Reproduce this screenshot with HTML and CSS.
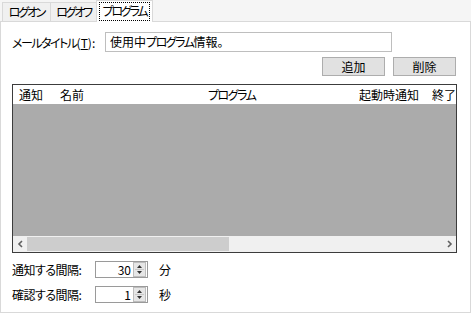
FILE: index.html
```html
<!DOCTYPE html>
<html lang="ja">
<head>
<meta charset="utf-8">
<link rel="stylesheet" href="styles.css">
</head>
<body>
<div class="tabs">
  <div class="tab t1"><span class="tk">ログオン</span></div>
  <div class="tab t2"><span class="tk">ログオフ</span></div>
  <div class="tab t3 active"><span class="focus"><span class="tk">プログラム</span></span></div>
</div>
<div class="panel">
  <div class="row title-row">
    <label class="title-label"><span class="k">メールタイトル</span>(<u>T</u>):</label>
    <div class="textbox">使用中<span class="k">プログラム</span>情報。</div>
  </div>
  <div class="row btn-row">
    <button class="btn">追加</button>
    <button class="btn">削除</button>
  </div>
  <div class="list">
    <div class="list-head">
      <div class="col c1">通知</div>
      <div class="col c2">名前</div>
      <div class="col c3"><span class="k">プログラム</span></div>
      <div class="col c4">起動時通知</div>
      <div class="col c5">終了</div>
    </div>
    <div class="list-body"></div>
    <div class="hscroll">
      <div class="arrow">
        <svg width="7" height="8" viewBox="0 0 7 8"><path d="M5 1 L2 4 L5 7" fill="none" stroke="#606060" stroke-width="1.6"/></svg>
      </div>
      <div class="track"><div class="thumb"></div></div>
      <div class="arrow">
        <svg width="7" height="8" viewBox="0 0 7 8"><path d="M2 1 L5 4 L2 7" fill="none" stroke="#606060" stroke-width="1.6"/></svg>
      </div>
    </div>
  </div>
  <div class="row spin-row">
    <span class="spin-label">通知する間隔:</span>
    <div class="spin">
      <span class="val">30</span>
      <span class="spin-btns">
        <svg width="11" height="13" viewBox="0 0 11 13"><path d="M3 5 L5.5 2 L8 5 Z" fill="#333"/><path d="M3 8 L5.5 11 L8 8 Z" fill="#333"/><path d="M1 6.5 H10" stroke="#c8c8c8" stroke-width="1"/></svg>
      </span>
    </div>
    <span class="unit">分</span>
  </div>
  <div class="row spin-row">
    <span class="spin-label">確認する間隔:</span>
    <div class="spin">
      <span class="val">1</span>
      <span class="spin-btns">
        <svg width="11" height="13" viewBox="0 0 11 13"><path d="M3 5 L5.5 2 L8 5 Z" fill="#333"/><path d="M3 8 L5.5 11 L8 8 Z" fill="#333"/><path d="M1 6.5 H10" stroke="#c8c8c8" stroke-width="1"/></svg>
      </span>
    </div>
    <span class="unit">秒</span>
  </div>
</div>
</body>
</html>
```
FILE: styles.css
```css
* { box-sizing: border-box; }
html, body {
  margin: 0;
  padding: 0;
}
body {
  width: 471px;
  height: 313px;
  background: #f5f5f5;
  font-family: "Noto Sans CJK JP", "Noto Sans", sans-serif;
  font-size: 12px;
  font-feature-settings: "palt";
  color: #000;
  overflow: hidden;
  white-space: nowrap;
}
.k {
  letter-spacing: -1.5px;
}
.tk {
  letter-spacing: -2.2px;
}
.tabs {
  display: flex;
  align-items: flex-end;
  height: 21px;
  padding-left: 2px;
  position: relative;
  z-index: 1;
}
.tab {
  height: 19px;
  border: 1px solid #d9d9d9;
  border-bottom: none;
  background: #f0f0f0;
  display: flex;
  align-items: center;
  justify-content: center;
  margin-right: -1px;
  line-height: 1;
}
.t1 { width: 49px; }
.t2 { width: 47px; }
.t3 { width: 57px; }
.tab.active {
  height: 22px;
  margin-bottom: -1px;
  background: #fff;
  align-items: flex-start;
  padding-top: 2px;
}
.focus {
  outline: 1px dotted #000;
  outline-offset: 0;
  padding: 2px 3px 3px 3px;
  line-height: 1;
  display: inline-block;
}
.panel {
  width: 471px;
  height: 292px;
  border: 1px solid #d9d9d9;
  background: #fff;
  padding: 0 13px 0 11px;
  display: flex;
  flex-direction: column;
}
.row {
  display: flex;
  align-items: center;
}
.title-row {
  margin-top: 10px;
  height: 20px;
}
.title-label {
  width: 93px;
  flex: none;
}
.title-label u { text-decoration: underline; }
.textbox {
  width: 287px;
  height: 20px;
  border: 1px solid #bebebe;
  padding: 0 4px;
  display: flex;
  align-items: center;
  line-height: 1;
}
.btn-row {
  margin-top: 5px;
  justify-content: flex-end;
  gap: 8px;
  padding-right: 1px;
}
.btn {
  width: 63px;
  height: 19px;
  border: 1px solid #adadad;
  background: #e1e1e1;
  font: inherit;
  font-feature-settings: "palt";
  color: #000;
  padding: 0;
  line-height: 1;
}
.list {
  margin-top: 8px;
  height: 169px;
  border: 1px solid #3c3c3c;
  display: flex;
  flex-direction: column;
  overflow: hidden;
}
.list-head {
  height: 19px;
  display: flex;
  align-items: center;
  background: #fff;
  flex: none;
}
.col {
  padding-left: 6px;
  flex: none;
  overflow: hidden;
}
.c1 { width: 41px; }
.c2 { width: 148px; }
.c3 { width: 151px; }
.c4 { width: 73px; }
.c5 { width: 40px; }
.list-body {
  flex: 1;
  background: #ababab;
}
.hscroll {
  height: 16px;
  flex: none;
  display: flex;
  background: #f0f0f0;
}
.arrow {
  width: 14px;
  display: flex;
  align-items: center;
  justify-content: center;
  flex: none;
}
.track {
  flex: 1;
  padding: 1px 0;
}
.thumb {
  width: 202px;
  height: 100%;
  background: #cdcdcd;
}
.spin-row {
  height: 17px;
  margin-top: 8px;
}
.spin-label {
  width: 83px;
  flex: none;
  letter-spacing: -0.5px;
}
.spin {
  width: 53px;
  height: 17px;
  border: 1px solid #9a9a9a;
  display: flex;
  align-items: center;
  justify-content: flex-end;
  padding-right: 1px;
}
.val {
  line-height: 1;
  margin-right: 2px;
}
.spin-btns {
  width: 13px;
  height: 15px;
  background: #e6e6e6;
  border: 1px solid #bdbdbd;
  display: flex;
  align-items: center;
  justify-content: center;
}
.unit {
  margin-left: 11px;
}
```
